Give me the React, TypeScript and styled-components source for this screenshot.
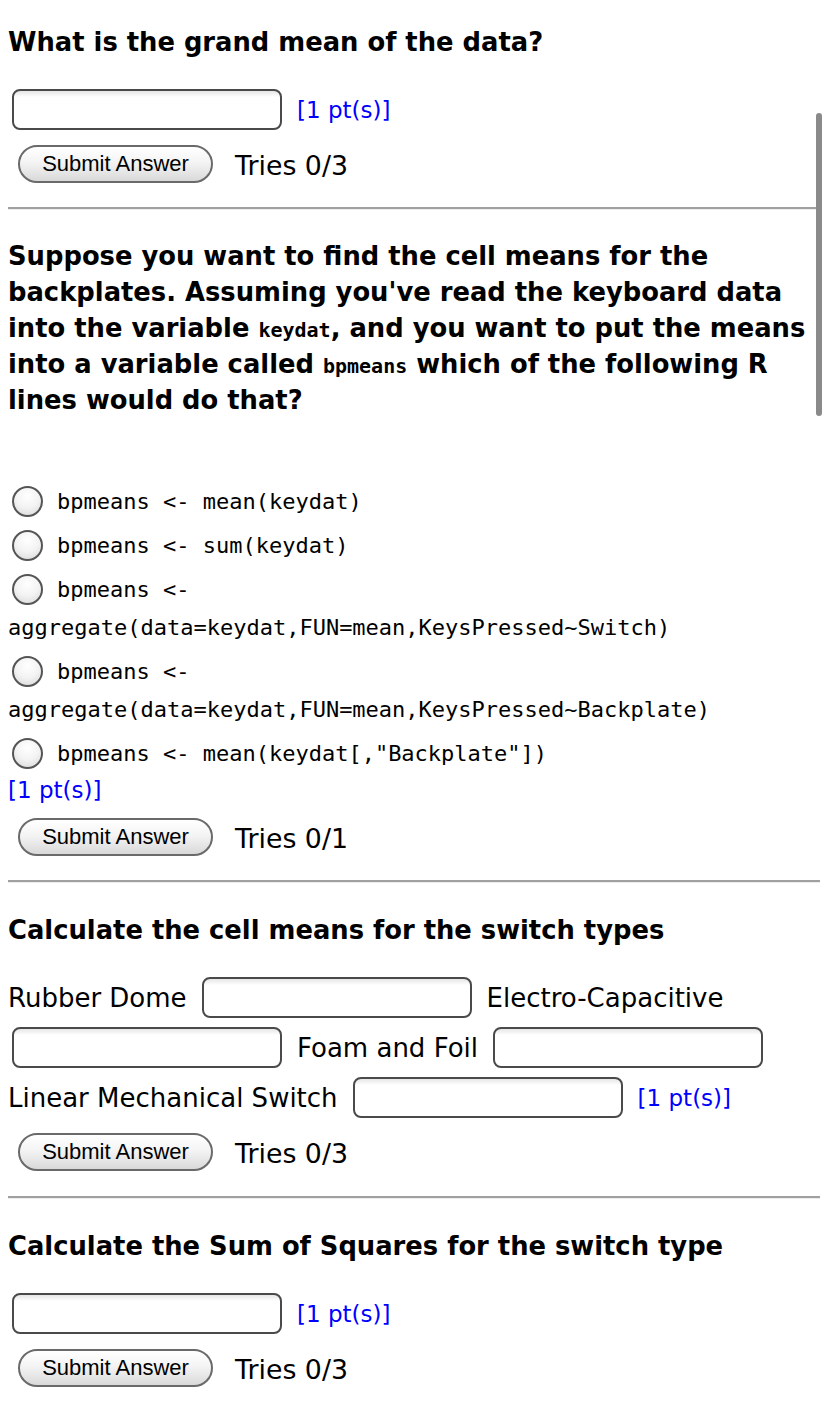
import React from "react";
import styled, { createGlobalStyle } from "styled-components";

const Global = createGlobalStyle`
  html, body { margin: 0; padding: 0; background: #fff; }
  body { font-family: "DejaVu Sans", Verdana, sans-serif; color: #000; }
`;

const Page = styled.div`
  position: relative;
  padding: 25px 8px 0 8px;
  width: 812px;
`;

const Scrollbar = styled.div`
  position: absolute;
  left: 816px;
  top: 113px;
  width: 6px;
  height: 303px;
  border-radius: 3px;
  background: #8a8a8a;
`;

const Section = styled.section<{ $top?: number }>`
  padding-top: ${(p) => p.$top ?? 0}px;
`;

const Heading = styled.h3<{ $lh?: number }>`
  margin: 0;
  font-family: "DejaVu Sans", Verdana, sans-serif;
  font-weight: bold;
  font-size: 25.8px;
  line-height: ${(p) => p.$lh ?? 34}px;
`;

const InlineCode = styled.code`
  font-family: "DejaVu Sans Mono", Menlo, monospace;
  font-weight: bold;
  font-size: 20px;
  line-height: 20px;
`;

const FieldRow = styled.div<{ $mt?: number }>`
  display: flex;
  flex-wrap: wrap;
  align-items: center;
  column-gap: 11px;
  row-gap: 9px;
  margin-top: ${(p) => p.$mt ?? 30}px;
  font-size: 26px;
  line-height: 30px;
`;

const Label = styled.span`
  white-space: nowrap;
`;

const TextBox = styled.div`
  box-sizing: border-box;
  width: 270px;
  height: 41px;
  margin: 0 4px;
  border: 2px solid #4a4a4a;
  border-radius: 8px;
  background: linear-gradient(#e6e6e6 0px, #fff 6px, #fff 100%);
`;

const Points = styled.span`
  color: #0000ff;
  font-family: "DejaVu Sans", Verdana, sans-serif;
  font-size: 23px;
  line-height: 34px;
  white-space: nowrap;
`;

const PointsLine = styled.div`
  color: #0000ff;
  font-size: 23px;
  line-height: 34px;
`;

const SubmitRow = styled.div<{ $mt?: number }>`
  display: flex;
  align-items: center;
  gap: 22px;
  margin-top: ${(p) => p.$mt ?? 15}px;
  padding-left: 10px;
`;

const Button = styled.button`
  box-sizing: border-box;
  width: 195px;
  height: 38px;
  padding: 0;
  border: 2px solid #6a6a6a;
  border-radius: 19px;
  background: linear-gradient(#ffffff 0%, #f4f4f4 45%, #d9d9d9 100%);
  font-family: "Liberation Sans", Arial, sans-serif;
  font-size: 22px;
  color: #000;
`;

const Tries = styled.span`
  font-size: 26.8px;
  line-height: 30px;
  padding-top: 4px;
`;

const Rule = styled.hr<{ $mt?: number }>`
  margin: ${(p) => p.$mt ?? 24}px 0 0 0;
  height: 0;
  border: 0;
  border-top: 2px solid #a0a0a0;
  border-bottom: 1px solid #ececec;
`;

const Options = styled.div`
  margin-top: 65px;
  display: flex;
  flex-direction: column;
  gap: 6px;
`;

const Option = styled.label`
  display: block;
  font-family: "DejaVu Sans Mono", Menlo, monospace;
  font-size: 22px;
  line-height: 38px;
`;

const Radio = styled.span`
  display: inline-block;
  box-sizing: border-box;
  width: 31px;
  height: 31px;
  margin: 0 14px 0 4px;
  vertical-align: -8px;
  border: 2px solid #555;
  border-radius: 50%;
  background: radial-gradient(circle at 50% 30%, #ffffff 0%, #f3f3f3 50%, #d6d6d6 100%);
`;

function Submit({ tries, mt }: { tries: string; mt?: number }) {
  return (
    <SubmitRow $mt={mt}>
      <Button type="button">Submit Answer</Button>
      <Tries>Tries {tries}</Tries>
    </SubmitRow>
  );
}

const options = [
  "bpmeans <- mean(keydat)",
  "bpmeans <- sum(keydat)",
  "bpmeans <- aggregate(data=keydat,FUN=mean,KeysPressed~Switch)",
  "bpmeans <- aggregate(data=keydat,FUN=mean,KeysPressed~Backplate)",
  'bpmeans <- mean(keydat[,"Backplate"])',
];

export default function App() {
  return (
    <>
      <Global />
      <Page>
        <Scrollbar />
        <Section>
          <Heading>What is the grand mean of the data?</Heading>
          <FieldRow>
            <TextBox />
            <Points>[1 pt(s)]</Points>
          </FieldRow>
          <Submit tries="0/3" />
          <Rule />
        </Section>

        <Section $top={28}>
          <Heading $lh={36}>
            Suppose you want to find the cell means for the backplates. Assuming
            you've read the keyboard data into the variable <InlineCode>keydat</InlineCode>,
            and you want to put the means into a variable called{" "}
            <InlineCode>bpmeans</InlineCode> which of the following R lines would do
            that?
          </Heading>
          <Options>
            {options.map((o) => (
              <Option key={o}>
                <Radio />
                {o}
              </Option>
            ))}
          </Options>
          <PointsLine>[1 pt(s)]</PointsLine>
          <Submit tries="0/1" mt={11} />
          <Rule />
        </Section>

        <Section $top={30}>
          <Heading>Calculate the cell means for the switch types</Heading>
          <FieldRow>
            <Label>Rubber Dome</Label>
            <TextBox />
            <Label>Electro-Capacitive</Label>
            <TextBox />
            <Label>Foam and Foil</Label>
            <TextBox />
            <Label>Linear Mechanical Switch</Label>
            <TextBox />
            <Points>[1 pt(s)]</Points>
          </FieldRow>
          <Submit tries="0/3" />
          <Rule $mt={25} />
        </Section>

        <Section $top={30}>
          <Heading>Calculate the Sum of Squares for the switch type</Heading>
          <FieldRow>
            <TextBox />
            <Points>[1 pt(s)]</Points>
          </FieldRow>
          <Submit tries="0/3" />
          <Rule />
        </Section>
      </Page>
    </>
  );
}
